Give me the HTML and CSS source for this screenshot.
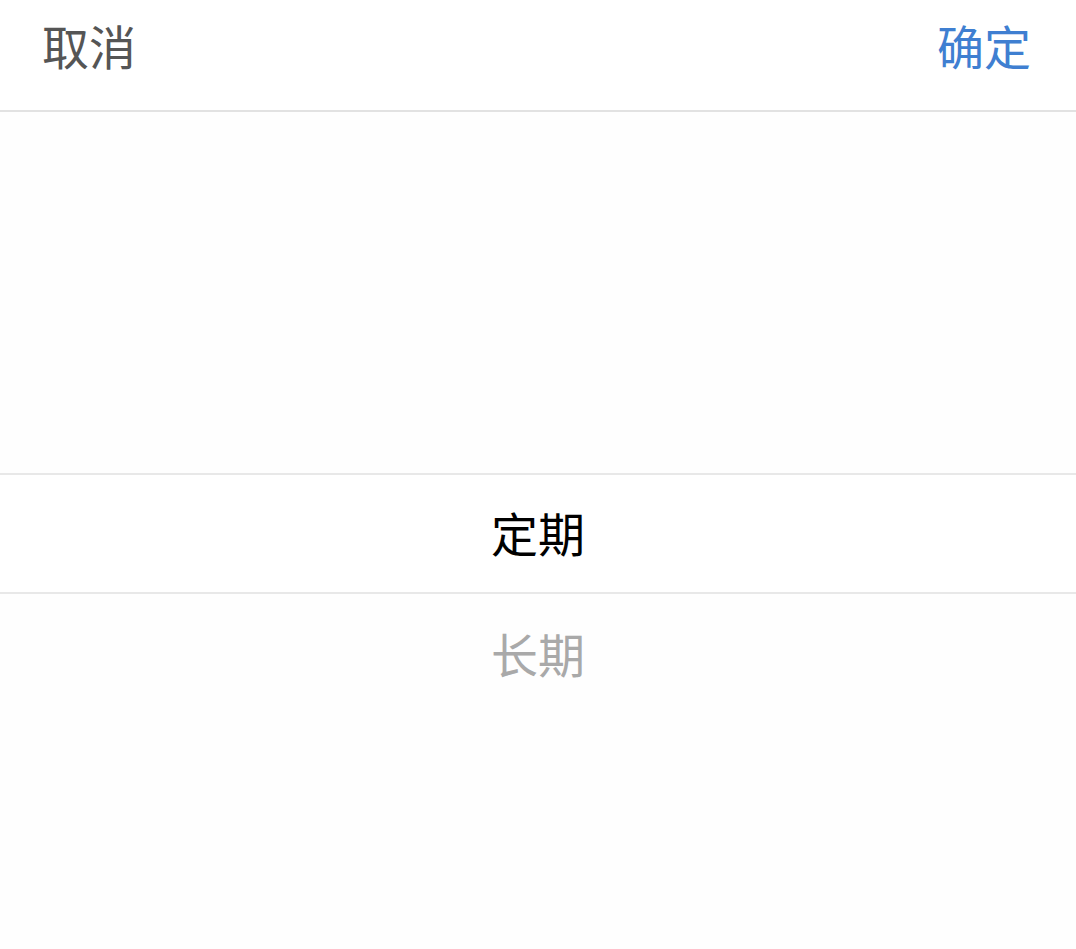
FILE: index.html
```html
<!DOCTYPE html>
<html lang="zh-CN">
<head>
<meta charset="utf-8">
<link rel="stylesheet" href="styles.css">
</head>
<body>
<div class="sheet">
  <div class="toolbar">
    <span class="btn cancel">取消</span>
    <span class="btn confirm">确定</span>
  </div>
  <div class="picker">
    <div class="row"></div>
    <div class="row"></div>
    <div class="row"></div>
    <div class="row selected">定期</div>
    <div class="row dim">长期</div>
    <div class="row"></div>
    <div class="row"></div>
  </div>
</div>
</body>
</html>
```
FILE: styles.css
```css
html, body {
  margin: 0;
  padding: 0;
  background: #fefefe;
}
.sheet {
  width: 1076px;
  height: 949px;
  overflow: hidden;
  font-family: "Noto Sans CJK SC", "Noto Sans", sans-serif;
}
.toolbar {
  height: 110px;
  border-bottom: 2px solid #e2e2e2;
  display: flex;
  justify-content: space-between;
  align-items: flex-start;
  padding: 0 45px 0 42px;
  background: #ffffff;
}
.btn {
  font-size: 47px;
  line-height: 47px;
  margin-top: 21px;
}
.cancel { color: #555555; }
.confirm { color: #3f7fd1; }
.picker {
  display: flex;
  flex-direction: column;
  padding-top: 1px;
}
.row {
  height: 120px;
  display: flex;
  align-items: center;
  justify-content: center;
  font-size: 47px;
  color: #000;
  box-sizing: border-box;
  padding-bottom: 4px;
}
.row.selected {
  height: 121px;
  border-top: 2px solid #e8e8e8;
  border-bottom: 2px solid #e8e8e8;
  background: #ffffff;
}
.row.dim {
  color: #a9a9a9;
}
```
